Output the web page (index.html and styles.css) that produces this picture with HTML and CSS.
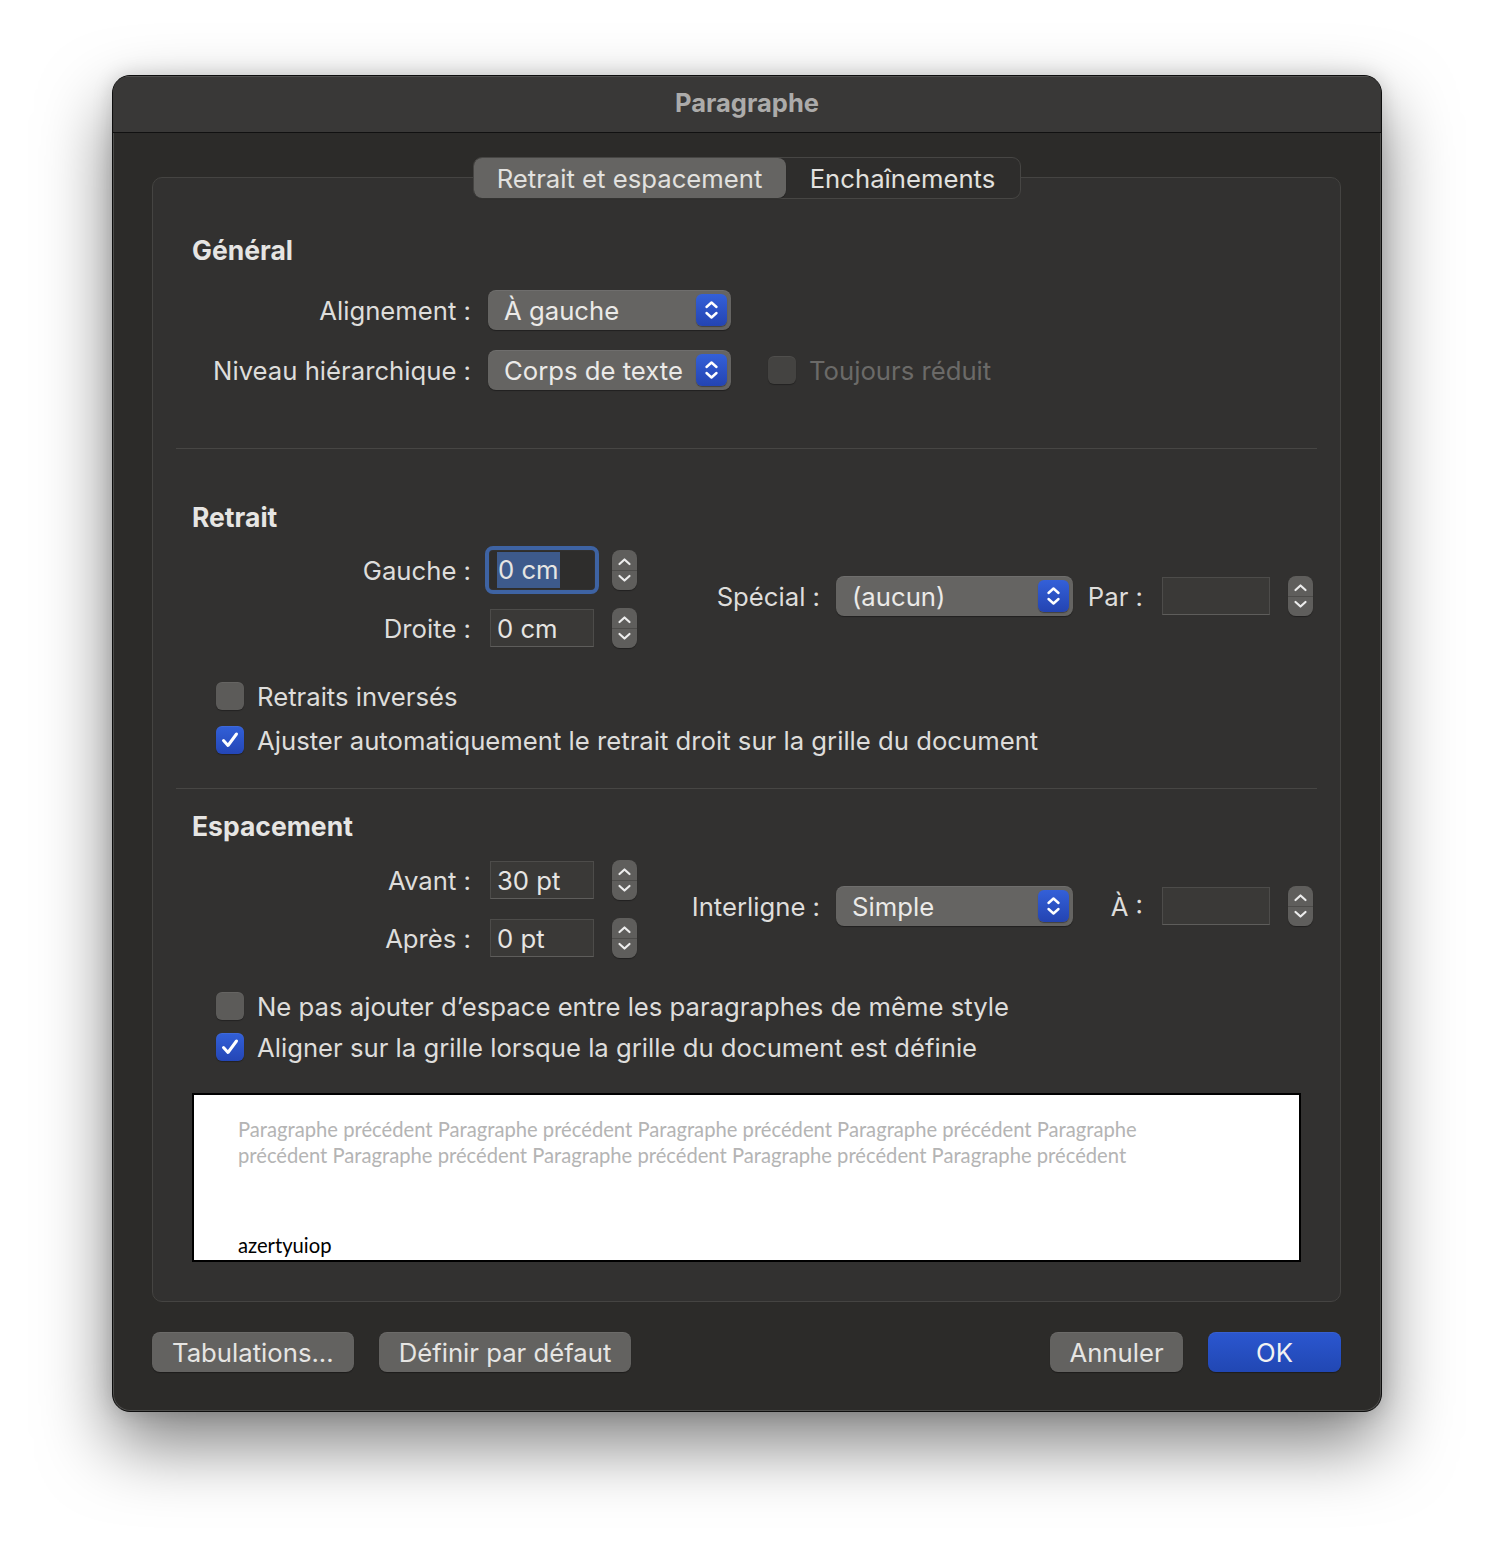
FILE: index.html
```html
<!DOCTYPE html>
<html lang="fr">
<head>
<meta charset="utf-8">
<title>Paragraphe</title>
<link rel="stylesheet" href="styles.css">
</head>
<body>
<div class="window">
  <div class="titlebar">Paragraphe</div>
  <div class="content">
    <div class="tabs">
      <div class="tab tab-a active">Retrait et espacement</div>
      <div class="tab tab-b">Enchaînements</div>
    </div>
    <div class="group">
      <h2 class="head">Général</h2>
      <div class="row row-first">
        <span class="lbl">Alignement :</span>
        <div class="popup popup-wide"><span>À gauche</span><span class="pbtn"><svg width="31" height="32" viewBox="0 0 31 32"><path d="M10.5 13 L15.5 8.5 L20.5 13 M10.5 19 L15.5 23.5 L20.5 19" fill="none" stroke="#fff" stroke-width="2.4" stroke-linecap="round" stroke-linejoin="round"/></svg></span></div>
      </div>
      <div class="row row-next">
        <span class="lbl">Niveau hiérarchique :</span>
        <div class="popup popup-wide"><span>Corps de texte</span><span class="pbtn"><svg width="31" height="32" viewBox="0 0 31 32"><path d="M10.5 13 L15.5 8.5 L20.5 13 M10.5 19 L15.5 23.5 L20.5 19" fill="none" stroke="#fff" stroke-width="2.4" stroke-linecap="round" stroke-linejoin="round"/></svg></span></div>
        <div class="check disabled"><span class="box"></span><span class="ctext">Toujours réduit</span></div>
      </div>

      <div class="sep sep-1"></div>

      <h2 class="head head-retrait">Retrait</h2>
      <div class="block block-retrait">
        <div class="left">
          <div class="frow">
            <span class="lbl">Gauche :</span>
            <div class="field focused"><span class="sel">0 cm</span></div>
            <div class="stepper"><svg width="25" height="40" viewBox="0 0 25 40"><path d="M7.5 14 L12.5 9.5 L17.5 14 M7.5 26 L12.5 30.5 L17.5 26" fill="none" stroke="#ececec" stroke-width="2.2" stroke-linecap="round" stroke-linejoin="round"/></svg></div>
          </div>
          <div class="frow">
            <span class="lbl">Droite :</span>
            <div class="field">0 cm</div>
            <div class="stepper"><svg width="25" height="40" viewBox="0 0 25 40"><path d="M7.5 14 L12.5 9.5 L17.5 14 M7.5 26 L12.5 30.5 L17.5 26" fill="none" stroke="#ececec" stroke-width="2.2" stroke-linecap="round" stroke-linejoin="round"/></svg></div>
          </div>
        </div>
        <div class="right">
          <span class="rlbl">Spécial :</span>
          <div class="popup popup-mid"><span>(aucun)</span><span class="pbtn"><svg width="31" height="32" viewBox="0 0 31 32"><path d="M10.5 13 L15.5 8.5 L20.5 13 M10.5 19 L15.5 23.5 L20.5 19" fill="none" stroke="#fff" stroke-width="2.4" stroke-linecap="round" stroke-linejoin="round"/></svg></span></div>
          <span class="slbl">Par :</span>
          <div class="field field-small"></div>
          <div class="stepper"><svg width="25" height="40" viewBox="0 0 25 40"><path d="M7.5 14 L12.5 9.5 L17.5 14 M7.5 26 L12.5 30.5 L17.5 26" fill="none" stroke="#ececec" stroke-width="2.2" stroke-linecap="round" stroke-linejoin="round"/></svg></div>
        </div>
      </div>

      <div class="checks checks-retrait">
        <div class="check"><span class="box"></span><span class="ctext">Retraits inversés</span></div>
        <div class="check checked"><span class="box"><svg width="28" height="28" viewBox="0 0 28 28"><path d="M7.5 14.5 L12 19.5 L20.5 8" fill="none" stroke="#fff" stroke-width="3" stroke-linecap="round" stroke-linejoin="round"/></svg></span><span class="ctext">Ajuster automatiquement le retrait droit sur la grille du document</span></div>
      </div>

      <div class="sep sep-2"></div>

      <h2 class="head head-esp">Espacement</h2>
      <div class="block block-esp">
        <div class="left">
          <div class="frow">
            <span class="lbl">Avant :</span>
            <div class="field">30 pt</div>
            <div class="stepper"><svg width="25" height="40" viewBox="0 0 25 40"><path d="M7.5 14 L12.5 9.5 L17.5 14 M7.5 26 L12.5 30.5 L17.5 26" fill="none" stroke="#ececec" stroke-width="2.2" stroke-linecap="round" stroke-linejoin="round"/></svg></div>
          </div>
          <div class="frow">
            <span class="lbl">Après :</span>
            <div class="field">0 pt</div>
            <div class="stepper"><svg width="25" height="40" viewBox="0 0 25 40"><path d="M7.5 14 L12.5 9.5 L17.5 14 M7.5 26 L12.5 30.5 L17.5 26" fill="none" stroke="#ececec" stroke-width="2.2" stroke-linecap="round" stroke-linejoin="round"/></svg></div>
          </div>
        </div>
        <div class="right">
          <span class="rlbl">Interligne :</span>
          <div class="popup popup-mid"><span>Simple</span><span class="pbtn"><svg width="31" height="32" viewBox="0 0 31 32"><path d="M10.5 13 L15.5 8.5 L20.5 13 M10.5 19 L15.5 23.5 L20.5 19" fill="none" stroke="#fff" stroke-width="2.4" stroke-linecap="round" stroke-linejoin="round"/></svg></span></div>
          <span class="slbl">À :</span>
          <div class="field field-small"></div>
          <div class="stepper"><svg width="25" height="40" viewBox="0 0 25 40"><path d="M7.5 14 L12.5 9.5 L17.5 14 M7.5 26 L12.5 30.5 L17.5 26" fill="none" stroke="#ececec" stroke-width="2.2" stroke-linecap="round" stroke-linejoin="round"/></svg></div>
        </div>
      </div>

      <div class="checks checks-esp">
        <div class="check"><span class="box"></span><span class="ctext">Ne pas ajouter d’espace entre les paragraphes de même style</span></div>
        <div class="check checked"><span class="box"><svg width="28" height="28" viewBox="0 0 28 28"><path d="M7.5 14.5 L12 19.5 L20.5 8" fill="none" stroke="#fff" stroke-width="3" stroke-linecap="round" stroke-linejoin="round"/></svg></span><span class="ctext">Aligner sur la grille lorsque la grille du document est définie</span></div>
      </div>

      <div class="preview">
        <div class="prev-text">Paragraphe précédent Paragraphe précédent Paragraphe précédent Paragraphe précédent Paragraphe<br>précédent Paragraphe précédent Paragraphe précédent Paragraphe précédent Paragraphe précédent</div>
        <div class="cur-text">azertyuiop</div>
      </div>
    </div>

    <div class="footer">
      <div class="btn">Tabulations...</div>
      <div class="btn">Définir par défaut</div>
      <div class="spacer"></div>
      <div class="btn btn-fixed">Annuler</div>
      <div class="btn btn-fixed btn-primary">OK</div>
    </div>
  </div>
</div>
</body>
</html>
```

FILE: styles.css
```css
html, body {
  margin: 0;
  padding: 0;
  background: #ffffff;
}
body {
  height: 1560px;
  overflow: hidden;
  font-family: "Inter", "Roboto", sans-serif;
  font-size: 25.7px;
  color: #dedddb;
}
.window {
  box-sizing: border-box;
  width: 1270px;
  margin: 75px 0 0 112px;
  background: #2c2b29;
  border: 1px solid #0e0e0e;
  border-radius: 18px;
  box-shadow: inset 0 0 0 1px rgba(255,255,255,0.16), 0 32px 70px rgba(0,0,0,0.5), 0 0 20px rgba(0,0,0,0.15);
  overflow: hidden;
}
.titlebar {
  height: 56px;
  line-height: 54px;
  text-align: center;
  background: #393837;
  border-bottom: 1px solid #111;
  font-weight: 700;
  font-size: 25.5px;
  color: #acabaa;
  box-shadow: inset 0 1px 0 rgba(255,255,255,0.12);
}
.content {
  padding: 24px 40px 39px 39px;
}
.tabs {
  position: relative;
  z-index: 1;
  display: flex;
  width: 548px;
  height: 42px;
  box-sizing: border-box;
  margin: 0 auto -22px;
  border: 1px solid #474644;
  border-radius: 9px;
  background: #2e2d2c;
  padding: 0;
}
.tab {
  display: flex;
  align-items: center;
  justify-content: center;
  height: 40px;
  color: #e2e1df;
  white-space: nowrap;
}
.tab-a { width: 312px; }
.tab-b { flex: 1; }
.tab.active {
  background: #656462;
  border-radius: 8px;
  box-shadow: 0 1px 1px rgba(0,0,0,0.3);
}
.group {
  border: 1px solid #454442;
  border-radius: 10px;
  background: #323130;
  padding: 56px 23px 39px;
}
.head {
  margin: 0 0 0 16px;
  font-size: 26.5px;
  font-weight: 700;
  line-height: 32px;
  height: 32px;
  color: #e6e5e3;
}
.head-retrait { margin-top: 52px; }
.head-esp { margin-top: 21px; }
.row {
  display: flex;
  align-items: center;
  height: 40px;
}
.row-first { margin-top: 24px; }
.row-next { margin-top: 20px; }
.lbl {
  width: 295px;
  flex: none;
  text-align: right;
  margin-right: 17px;
  white-space: nowrap;
}
.popup {
  display: flex;
  align-items: center;
  justify-content: space-between;
  box-sizing: border-box;
  height: 40px;
  padding: 0 4px 0 16px;
  background: #656462;
  border-radius: 8px;
  box-shadow: inset 0 1px 0 rgba(255,255,255,0.07), 0 1px 1px rgba(0,0,0,0.35);
  color: #ebeae8;
  flex: none;
  white-space: nowrap;
}
.popup-wide { width: 243px; }
.popup-mid { width: 237px; }
.pbtn {
  display: block;
  width: 31px;
  height: 32px;
  border-radius: 6px;
  background: linear-gradient(#3460d8, #2444b2);
  box-shadow: 0 1px 1px rgba(0,0,0,0.35);
  flex: none;
}
.pbtn svg { display: block; }
.check {
  display: flex;
  align-items: center;
  height: 32px;
  white-space: nowrap;
}
.box {
  width: 28px;
  height: 28px;
  box-sizing: border-box;
  border-radius: 6px;
  background: #5c5b59;
  box-shadow: inset 0 1px 0 rgba(255,255,255,0.06), 0 1px 1px rgba(0,0,0,0.3);
  margin-right: 13px;
  flex: none;
}
.box svg { display: block; }
.check.checked .box {
  background: linear-gradient(#3260d8, #2446b6);
}
.check.disabled { margin-left: 37px; }
.check.disabled .box { background: #444341; }
.check.disabled .ctext { color: #6b6a68; }
.sep {
  height: 1px;
  background: #474644;
}
.sep-1 { margin-top: 58px; }
.sep-2 { margin-top: 32px; }
.block {
  display: flex;
  align-items: center;
}
.block-retrait { margin-top: 17px; }
.block-esp { margin-top: 18px; }
.left {
  display: flex;
  flex-direction: column;
  gap: 18px;
  flex: none;
}
.frow {
  display: flex;
  align-items: center;
  height: 40px;
}
.field {
  box-sizing: border-box;
  width: 104px;
  height: 38px;
  margin-left: 2px;
  padding-left: 6px;
  display: flex;
  align-items: center;
  background: #3a3937;
  border: 1px solid #4d4c4a;
  border-bottom-color: #5e5d5b;
  color: #e6e5e3;
  flex: none;
  white-space: nowrap;
}
.field.focused {
  height: 38px;
  background: #2e2d2c;
  outline: 4px solid #3e63a3;
  outline-offset: 1px;
  border-radius: 3px;
  border-color: #2e2d2c;
}
.sel {
  background: #3d5a8c;
  line-height: 36px;
  padding: 0 1px;
}
.stepper {
  width: 25px;
  height: 40px;
  margin-left: 18px;
  border-radius: 8px;
  background: linear-gradient(#5f5e5c 0, #5f5e5c 49%, #4d4c4a 49%, #4d4c4a 52%, #5f5e5c 52%);
  box-shadow: 0 1px 1px rgba(0,0,0,0.35);
  flex: none;
}
.stepper svg { display: block; }
.right {
  display: flex;
  align-items: center;
  margin-bottom: 6px;
}
.rlbl {
  width: 183px;
  text-align: right;
  margin-right: 16px;
  flex: none;
  white-space: nowrap;
}
.slbl {
  width: 56px;
  text-align: right;
  margin: 0 19px 0 14px;
  flex: none;
  white-space: nowrap;
}
.field-small {
  width: 108px;
  height: 38px;
  margin-left: 0;
}
.checks {
  display: flex;
  flex-direction: column;
  padding-left: 40px;
}
.checks-retrait { margin-top: 32px; gap: 12px; }
.checks-esp { margin-top: 32px; gap: 9px; }
.preview {
  margin: 30px 16px 0;
  height: 169px;
  box-sizing: border-box;
  background: #ffffff;
  border: 2px solid #000;
  padding: 21px 44px 0;
  font-family: "Lato", "Liberation Sans", sans-serif;
  font-size: 20.2px;
}
.prev-text {
  line-height: 26px;
  color: #b4b4b4;
  white-space: nowrap;
}
.cur-text {
  margin-top: 64px;
  line-height: 26px;
  color: #000;
}
.footer {
  display: flex;
  align-items: center;
  margin-top: 30px;
  gap: 25px;
}
.spacer { flex: 1; }
.btn {
  height: 40px;
  box-sizing: border-box;
  padding: 0 20px;
  display: flex;
  align-items: center;
  justify-content: center;
  background: #636260;
  border-radius: 8px;
  box-shadow: inset 0 1px 0 rgba(255,255,255,0.06), 0 1px 1px rgba(0,0,0,0.35);
  color: #e6e5e3;
  white-space: nowrap;
}
.btn-fixed { width: 133px; }
.btn-primary {
  background: linear-gradient(#2b57d0, #2147b3);
  color: #f2f2f2;
}
```
